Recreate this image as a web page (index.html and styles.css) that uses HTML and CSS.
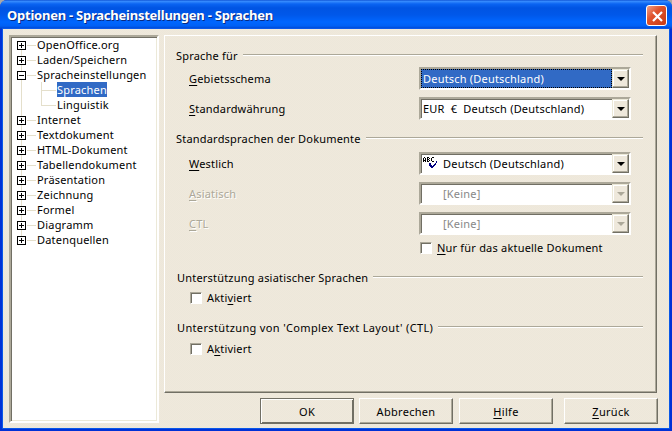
FILE: index.html
```html
<!DOCTYPE html>
<html lang="de">
<head>
<meta charset="utf-8">
<title>Optionen</title>
<link rel="stylesheet" href="styles.css">
</head>
<body>
<div class="window">
  <header class="titlebar">
    <h1>Optionen - Spracheinstellungen - Sprachen</h1>
    <button class="close" aria-label="Schließen"><svg width="21" height="21" viewBox="0 0 21 21"><path d="M6 6L15 15M15 6L6 15" stroke="#fff" stroke-width="2.2"/></svg></button>
  </header>
  <div class="client">
    <nav class="tree">
      <ul>
        <li><i class="box plus"></i><span>OpenOffice.org</span></li>
        <li><i class="box plus"></i><span>Laden/Speichern</span></li>
        <li><i class="box"></i><span>Spracheinstellungen</span></li>
        <li class="child"><span class="selected">Sprachen</span></li>
        <li class="child last"><span>Linguistik</span></li>
        <li><i class="box plus"></i><span>Internet</span></li>
        <li><i class="box plus"></i><span>Textdokument</span></li>
        <li><i class="box plus"></i><span>HTML-Dokument</span></li>
        <li><i class="box plus"></i><span>Tabellendokument</span></li>
        <li><i class="box plus"></i><span>Präsentation</span></li>
        <li><i class="box plus"></i><span>Zeichnung</span></li>
        <li><i class="box plus"></i><span>Formel</span></li>
        <li><i class="box plus"></i><span>Diagramm</span></li>
        <li><i class="box plus"></i><span>Datenquellen</span></li>
      </ul>
    </nav>
    <div class="side">
      <main class="panel">
        <h2 class="g1">Sprache für</h2>
        <div class="field f1"><label><u>G</u>ebietsschema</label><div class="combo focus"><span>Deutsch (Deutschland)</span><b></b></div></div>
        <div class="field f2"><label><u>S</u>tandardwährung</label><div class="combo"><span>EUR&nbsp; €&nbsp; Deutsch (Deutschland)</span><b></b></div></div>
        <h2 class="g2">Standardsprachen der Dokumente</h2>
        <div class="field f3"><label><u>W</u>estlich</label><div class="combo icon"><svg width="17" height="13" viewBox="0 0 17 13" shape-rendering="crispEdges"><path d="M1.5 0V1M.5 1V5M2.5 1V5M1 3.500H2M4.500 0V5M5 .5H6M5 2.500H6M5 4.500H6M6.500 1V2M6.500 3V4M8.500 1V4M9 .5H11M9 4.500H11" stroke="#000"/><path d="M6 6H8V8H9V9H10V8H11V7H12V6H13V4H14V6H13V8H12V9H11V10H10V11H8V10H7V9H6Z" fill="#000080"/></svg><span>Deutsch (Deutschland)</span><b></b></div></div>
        <div class="field f4 off"><label><u>A</u>siatisch</label><div class="combo icon"><span>[Keine]</span><b></b></div></div>
        <div class="field f5 off"><label><u>C</u>TL</label><div class="combo icon"><span>[Keine]</span><b></b></div></div>
        <label class="check c1"><i></i><span><u>N</u>ur für das aktuelle Dokument</span></label>
        <h2 class="g3">Unterstützung asiatischer Sprachen</h2>
        <label class="check c2"><i></i><span>Akti<u>v</u>iert</span></label>
        <h2 class="g4">Unterstützung von 'Complex Text Layout' (CTL)</h2>
        <label class="check c3"><i></i><span>A<u>k</u>tiviert</span></label>
      </main>
      <footer>
        <button class="btn default">OK</button>
        <button class="btn">Abbrechen</button>
        <button class="btn"><span><u>H</u>ilfe</span></button>
        <button class="btn back"><span><u>Z</u>urück</span></button>
      </footer>
    </div>
  </div>
</div>
</body>
</html>
```
FILE: styles.css
```css
*, *::after { box-sizing: border-box; margin: 0; padding: 0; }
body { width: 672px; height: 431px; overflow: hidden; background: #a8a8a8; font: 11px/15px "Noto Sans", "Open Sans", sans-serif; letter-spacing: .2px; color: #000; }
u { text-decoration: underline; text-underline-offset: 2px; text-decoration-thickness: 1px; }
.window { width: 672px; height: 431px; display: flex; flex-direction: column; border-radius: 7px 7px 0 0; overflow: hidden; background: #0031d6; }
.titlebar { height: 29px; flex: none; display: flex; align-items: center; justify-content: space-between; padding: 2px 5px 0 7px; background: linear-gradient(#0040c8 0, #3b90ff 1px, #0a64f2 4px, #0054e3 8px, #0058ea 15px, #0066ff 22px, #0060f5 26px, #0040c8 29px); }
h1 { font: bold 13px/18px "Noto Sans", sans-serif; letter-spacing: -.24px; margin-top: -1px; color: #fff; text-shadow: 1px 1px #0a2a80; }
.close { width: 21px; height: 21px; border: 1px solid #fff; border-radius: 3px; background: linear-gradient(135deg, #f0a088, #e0532c 40%, #c83a14); display: grid; place-items: center; }
.client { flex: 1; display: flex; margin: 0 3px 3px; padding: 6px 0 0 6px; background: repeating-conic-gradient(#f0e8dc 0 25%, #ece8da 0 50%) 0 0 / 2px 2px; box-shadow: 0 0 0 1px #0a58e8; }
.tree { width: 150px; height: 388px; border: 2px solid; border-color: #aca899 #fff #fff #aca899; box-shadow: inset 1px 1px #716f64, inset -1px -1px #ece9d8; background: #fff; padding-left: 5px; }
ul { list-style: none; height: 210px; background: linear-gradient(#e4dfcb, #e4dfcb) 5px 8px / 1px 195px no-repeat; }
li { height: 15px; display: flex; align-items: center; background: linear-gradient(#e4dfcb, #e4dfcb) 11px 8px / 9px 1px no-repeat; }
li span { white-space: nowrap; height: 15px; }
.box { width: 9px; height: 9px; margin: 1px 11px 0 1px; flex: none; border: 1px solid #000; background: linear-gradient(#000, #000) 1px 3px / 5px 1px no-repeat, #fff; }
.plus { background: linear-gradient(#000, #000) 1px 3px / 5px 1px no-repeat, linear-gradient(#000, #000) 3px 1px / 1px 5px no-repeat, #fff; }
.child { padding-left: 41px; background: linear-gradient(#e4dfcb, #e4dfcb) 25px 0 / 1px 15px no-repeat, linear-gradient(#e4dfcb, #e4dfcb) 25px 8px / 15px 1px no-repeat; }
.last { background-size: 1px 8px, 15px 1px; }
.selected { background: #316ac5; color: #fff; width: 50px; }
.side { margin-left: 5px; width: 494px; }
.panel { height: 358px; width: 493px; padding: 12px 13px 0 12px; border: 1px solid; border-color: #fff #716f64 #716f64 #fff; box-shadow: inset -1px -1px #aca899; }
h2 { font: inherit; height: 15px; display: flex; align-items: center; white-space: nowrap; }
h2::after { content: ""; flex: 1; height: 2px; background: #aca899; border-bottom: 1px solid #fff; margin: -1px 0 0 5px; }
.g1, .g2 { margin-left: -1px; }
.field { height: 23px; display: flex; align-items: center; padding-left: 12px; }
.field label { width: 230px; }
.f1 { margin-top: 4px; }
.f2 { margin-top: 7px; }
.g2 { margin-top: 11px; }
.f3 { margin-top: 6px; }
.f4, .f5 { margin-top: 7px; }
.off label { color: #aca899; text-shadow: 1px 1px #fff; }
.combo { width: 212px; height: 23px; border: 2px solid; border-color: #aca899 #fff #fff #aca899; box-shadow: inset 1px 1px #716f64; background: #fff; display: flex; align-items: center; }
.combo span { flex: 1; height: 19px; line-height: 19px; padding-left: 2px; white-space: nowrap; }
.combo b { width: 17px; height: 19px; border: 1px solid; border-color: #ece9d8 #716f64 #716f64 #ece9d8; box-shadow: inset -1px -1px #aca899, inset 1px 1px #fff; background: #eee8db; display: grid; place-items: center; }
.combo b::after { content: ""; border: 4px solid transparent; border-top-color: #000; border-bottom: 0; }
.focus span { background: #316ac5; color: #fff; outline: 1px dotted #000; outline-offset: -1px; }
.icon svg { margin-left: 2px; fill: none; }
.icon span { padding-left: 3px; }
.off .icon span { padding-left: 22px; color: #888; }
.off b::after { border-top-color: #aca899; }
.check { display: flex; height: 15px; align-items: center; gap: 5px; }
.check i { width: 12px; height: 12px; background: #fff; border: 1px solid; border-color: #aca899 #fff #fff #aca899; box-shadow: inset 1px 1px #716f64; }
.c1 { margin: 5px 0 0 243px; }
.g3 { margin: 15px 0 5px; }
.c2, .c3 { margin-left: 13px; }
.g4 { margin: 15px 0 6px; letter-spacing: .35px; }
footer { display: flex; margin: 5px 0 0 96px; }
.btn { width: 94px; height: 26px; margin-right: 6px; font: inherit; letter-spacing: .3px; color: #000; background: transparent; border: 1px solid; border-color: #fff #716f64 #716f64 #fff; box-shadow: inset -1px -1px #aca899; }
.default { margin-right: 5px; border-color: #716f64; box-shadow: inset 1px 1px #fff, inset -1px -1px #716f64; }
.back { margin: 0 0 0 5px; }
```
